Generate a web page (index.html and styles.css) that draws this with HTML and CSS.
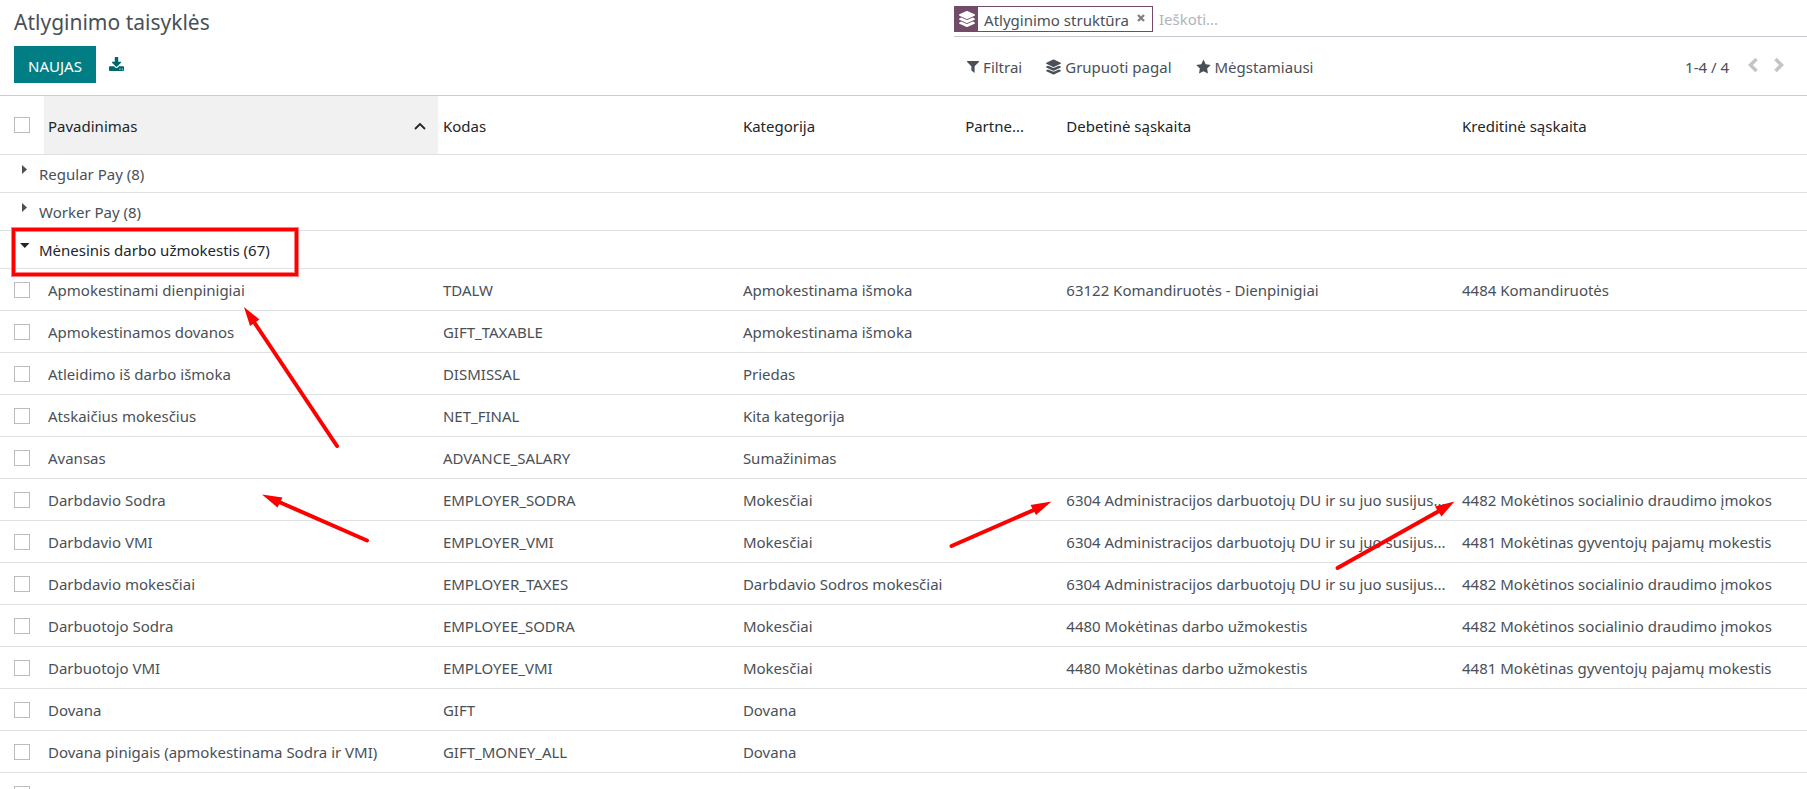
FILE: index.html
```html
<!DOCTYPE html>
<html lang="lt">
<head>
<meta charset="utf-8">
<title>Atlyginimo taisyklės</title>
<link rel="stylesheet" href="styles.css">
</head>
<body>
<svg class="defs" aria-hidden="true">
  <symbol id="layers" viewBox="0 0 512 512"><path d="M12.41 148.02l232.94 105.67c6.8 3.09 14.49 3.09 21.29 0l232.94-105.67c16.55-7.51 16.55-32.52 0-40.03L266.65 2.31a25.607 25.607 0 0 0-21.29 0L12.41 107.98c-16.55 7.51-16.55 32.53 0 40.04zm487.18 88.28l-58.09-26.33-161.64 73.27c-7.56 3.43-15.59 5.17-23.86 5.17s-16.29-1.74-23.86-5.17L70.51 209.97l-58.1 26.33c-16.55 7.5-16.55 32.5 0 40l232.94 105.59c6.8 3.08 14.49 3.08 21.29 0L499.59 276.3c16.55-7.5 16.55-32.5 0-40zm0 127.8l-57.87-26.23-161.86 73.37c-7.56 3.43-15.59 5.17-23.86 5.17s-16.29-1.74-23.86-5.17L70.29 337.87 12.41 364.1c-16.55 7.5-16.55 32.5 0 40l232.94 105.59c6.8 3.08 14.49 3.08 21.29 0L499.59 404.1c16.55-7.5 16.55-32.5 0-40z"/></symbol>
</svg>
<header class="panel">
  <div class="panel-left">
    <h1 class="title">Atlyginimo taisyklės</h1>
    <div class="actions">
      <button class="btn-new" type="button">NAUJAS</button>
      <button class="btn-icon" type="button" aria-label="Eksportuoti">
        <svg width="15" height="14" viewBox="0 0 1664 1536"><path d="M1280 1344q0-26-19-45t-45-19-45 19-19 45 19 45 45 19 45-19 19-45zm256 0q0-26-19-45t-45-19-45 19-19 45 19 45 45 19 45-19 19-45zm128-224v320q0 40-28 68t-68 28h-1472q-40 0-68-28t-28-68v-320q0-40 28-68t68-28h465l135 136q58 56 136 56t136-56l136-136h464q40 0 68 28t28 68zm-325-569q17 41-14 70l-448 448q-18 19-45 19t-45-19l-448-448q-31-29-14-70 17-39 59-39h256v-448q0-26 19-45t45-19h256q26 0 45 19t19 45v448h256q42 0 59 39z"/></svg>
      </button>
    </div>
  </div>
  <div class="panel-right">
    <div class="search">
      <div class="facet">
        <span class="facet-icon"><svg width="16" height="16"><use href="#layers"/></svg></span>
        <span class="facet-label">Atlyginimo struktūra</span>
        <button class="facet-remove" type="button" aria-label="Pašalinti"><svg width="8" height="8" viewBox="0 0 8 8"><path d="M1 1l6 6M7 1L1 7" stroke="currentColor" stroke-width="2.400"/></svg></button>
      </div>
      <input class="search-input" type="text" placeholder="Ieškoti..." aria-label="Ieškoti">
    </div>
    <div class="tools">
      <div class="menus">
        <button class="menu" type="button"><svg width="12" height="16" viewBox="0 0 12 16"><path d="M0.300 2h11.400q.5.600 0 1.200L7.600 7.300V14L4.400 11.500V7.300L.3 3.200q-.5-.6 0-1.200z"/></svg>Filtrai</button>
        <button class="menu" type="button"><svg width="15" height="16"><use href="#layers"/></svg>Grupuoti pagal</button>
        <button class="menu" type="button"><svg width="15" height="16" viewBox="0 0 15 16"><path d="M7.500 0.500l2.200 4.700 5.100.7-3.700 3.600.9 5.100-4.500-2.400L3 14.600l.9-5.100L.2 5.900l5.100-.7z"/></svg>Mėgstamiausi</button>
      </div>
      <div class="pager">
        <span>1-4 / 4</span>
        <div class="pager-nav">
          <button type="button" aria-label="Ankstesnis"><svg width="10" height="14" viewBox="0 0 10 14"><path d="M8.500 1L2.500 7l6 6" /></svg></button>
          <button type="button" aria-label="Kitas"><svg width="10" height="14" viewBox="0 0 10 14"><path d="M1.500 1l6 6-6 6" /></svg></button>
        </div>
      </div>
    </div>
  </div>
</header>
<main>
<table class="list">
  <colgroup><col class="c-check"><col class="c-name"><col class="c-code"><col class="c-cat"><col class="c-partner"><col class="c-debit"><col class="c-credit"></colgroup>
  <thead>
    <tr>
      <th class="check"><input type="checkbox" aria-label="Pažymėti viską"></th>
      <th class="sorted" scope="col"><div class="sort"><span>Pavadinimas</span><svg width="12" height="8" viewBox="0 0 12 8"><path d="M1 7l5-5 5 5" fill="none" stroke="currentColor" stroke-width="1.800"/></svg></div></th>
      <th scope="col">Kodas</th><th scope="col">Kategorija</th><th scope="col">Partne...</th><th scope="col">Debetinė sąskaita</th><th scope="col">Kreditinė sąskaita</th>
    </tr>
  </thead>
  <tbody>
    <tr class="group"><th colspan="7"><div class="group-name"><svg width="10" height="10" viewBox="0 0 10 10"><path d="M2 0l5 4.500L2 9z"/></svg>Regular Pay (8)</div></th></tr>
    <tr class="group"><th colspan="7"><div class="group-name"><svg width="10" height="10" viewBox="0 0 10 10"><path d="M2 0l5 4.500L2 9z"/></svg>Worker Pay (8)</div></th></tr>
    <tr class="group open"><th colspan="7"><div class="group-name"><svg width="10" height="10" viewBox="0 0 10 10"><path d="M0 2h9.500L4.800 7z"/></svg>Mėnesinis darbo užmokestis (67)</div></th></tr>
    <tr><td class="check"><input type="checkbox" aria-label="Apmokestinami dienpinigiai"></td><td class="name">Apmokestinami dienpinigiai</td><td>TDALW</td><td>Apmokestinama išmoka</td><td></td><td>63122 Komandiruotės - Dienpinigiai</td><td>4484 Komandiruotės</td></tr>
    <tr><td class="check"><input type="checkbox" aria-label="Apmokestinamos dovanos"></td><td class="name">Apmokestinamos dovanos</td><td>GIFT_TAXABLE</td><td>Apmokestinama išmoka</td><td></td><td></td><td></td></tr>
    <tr><td class="check"><input type="checkbox" aria-label="Atleidimo iš darbo išmoka"></td><td class="name">Atleidimo iš darbo išmoka</td><td>DISMISSAL</td><td>Priedas</td><td></td><td></td><td></td></tr>
    <tr><td class="check"><input type="checkbox" aria-label="Atskaičius mokesčius"></td><td class="name">Atskaičius mokesčius</td><td>NET_FINAL</td><td>Kita kategorija</td><td></td><td></td><td></td></tr>
    <tr><td class="check"><input type="checkbox" aria-label="Avansas"></td><td class="name">Avansas</td><td>ADVANCE_SALARY</td><td>Sumažinimas</td><td></td><td></td><td></td></tr>
    <tr><td class="check"><input type="checkbox" aria-label="Darbdavio Sodra"></td><td class="name">Darbdavio Sodra</td><td>EMPLOYER_SODRA</td><td>Mokesčiai</td><td></td><td>6304 Administracijos darbuotojų DU ir su juo susijus...</td><td>4482 Mokėtinos socialinio draudimo įmokos</td></tr>
    <tr><td class="check"><input type="checkbox" aria-label="Darbdavio VMI"></td><td class="name">Darbdavio VMI</td><td>EMPLOYER_VMI</td><td>Mokesčiai</td><td></td><td>6304 Administracijos darbuotojų DU ir su juo susijus...</td><td>4481 Mokėtinas gyventojų pajamų mokestis</td></tr>
    <tr><td class="check"><input type="checkbox" aria-label="Darbdavio mokesčiai"></td><td class="name">Darbdavio mokesčiai</td><td>EMPLOYER_TAXES</td><td>Darbdavio Sodros mokesčiai</td><td></td><td>6304 Administracijos darbuotojų DU ir su juo susijus...</td><td>4482 Mokėtinos socialinio draudimo įmokos</td></tr>
    <tr><td class="check"><input type="checkbox" aria-label="Darbuotojo Sodra"></td><td class="name">Darbuotojo Sodra</td><td>EMPLOYEE_SODRA</td><td>Mokesčiai</td><td></td><td>4480 Mokėtinas darbo užmokestis</td><td>4482 Mokėtinos socialinio draudimo įmokos</td></tr>
    <tr><td class="check"><input type="checkbox" aria-label="Darbuotojo VMI"></td><td class="name">Darbuotojo VMI</td><td>EMPLOYEE_VMI</td><td>Mokesčiai</td><td></td><td>4480 Mokėtinas darbo užmokestis</td><td>4481 Mokėtinas gyventojų pajamų mokestis</td></tr>
    <tr><td class="check"><input type="checkbox" aria-label="Dovana"></td><td class="name">Dovana</td><td>GIFT</td><td>Dovana</td><td></td><td></td><td></td></tr>
    <tr><td class="check"><input type="checkbox" aria-label="Dovana pinigais"></td><td class="name">Dovana pinigais (apmokestinama Sodra ir VMI)</td><td>GIFT_MONEY_ALL</td><td>Dovana</td><td></td><td></td><td></td></tr>
    <tr><td class="check"><input type="checkbox" aria-label="Kita taisyklė"></td><td></td><td></td><td></td><td></td><td></td><td></td></tr>
  </tbody>
</table>
</main>
<svg class="marks" width="1807" height="789" viewBox="0 0 1807 789" aria-hidden="true">
  <rect x="13.500" y="229.500" width="283" height="45" fill="none" stroke="#ff8080" stroke-width="5"/>
  <rect x="13.500" y="229.500" width="283" height="45" fill="none" stroke="#f00" stroke-width="3"/>
  <g stroke="#f00" stroke-width="4" stroke-linecap="round">
    <path d="M254 322L337 446"/><path d="M278 501.500L367 540.500"/><path d="M1035 509.500L951.500 546"/><path d="M1439 511L1337.500 568"/>
  </g>
  <g fill="#f00">
    <path d="M244 307L259.500 319.500L250 326z"/><path d="M262 494.500L282.500 497.500L277.500 507.500z"/><path d="M1051.500 501.500L1030.500 505L1036 515z"/><path d="M1454.500 501.500L1435 506.500L1441.500 516.500z"/>
  </g>
</svg>
</body>
</html>
```
FILE: styles.css
```css
* { box-sizing: border-box; }
body {
  margin: 0;
  height: 100vh;
  overflow: hidden;
  background: #fff;
  color: #495057;
  font: 15px/24px "Noto Sans", "Open Sans", sans-serif;
}
button {
  margin: 0;
  padding: 0;
  border: 0;
  background: none;
  color: inherit;
  font: inherit;
}
svg { display: block; fill: currentColor; }
.defs { position: absolute; width: 0; height: 0; }

.panel {
  display: grid;
  grid-template-columns: 52.8% 1fr;
  border-bottom: 1px solid #c9ccd2;
}
.panel-left { padding: 6px 14px 12px; }
.title {
  margin: 0;
  font-size: 21px;
  line-height: 32px;
  font-weight: 400;
}
.actions {
  display: flex;
  align-items: center;
  gap: 13px;
  margin-top: 8px;
}
.btn-new {
  height: 37px;
  padding: 2px 14px 0;
  background: #017e84;
  color: #fff;
}
.btn-icon { padding-bottom: 2px; color: #01666b; }

.search {
  display: flex;
  align-items: center;
  gap: 6px;
  height: 37px;
  padding-top: 1px;
  border-bottom: 1px solid #c5c8d0;
}
.facet {
  display: flex;
  align-items: stretch;
  height: 26px;
  border: 1px solid #714b67;
}
.facet-icon {
  display: flex;
  align-items: center;
  justify-content: center;
  width: 23px;
  background: #714b67;
  color: #fff;
}
.facet-label { padding: 1px 8px 0 6px; }
.facet-remove { padding: 0 7px 2px 0; color: #808488; }
.search-input {
  flex: 1;
  min-width: 0;
  padding: 0;
  border: 0;
  outline: 0;
  font: inherit;
  color: inherit;
}
.search-input::placeholder { color: #b0b4ba; opacity: 1; }
.tools {
  display: flex;
  justify-content: space-between;
  padding: 18px 23px 0 13px;
}
.menus { display: flex; gap: 24px; }
.menu { display: flex; align-items: center; gap: 4px; }
.pager { display: flex; gap: 19px; }
.pager-nav { display: flex; gap: 16px; padding-bottom: 4px; }
.pager-nav path { fill: none; stroke: #c2c4c9; stroke-width: 3.5; }

.list {
  width: 100%;
  table-layout: fixed;
  border-collapse: separate;
  border-spacing: 0;
}
.c-check { width: 44px; }
.c-name { width: 21.8%; }
.c-code { width: 16.6%; }
.c-cat { width: 12.3%; }
.c-partner { width: 5.6%; }
.c-debit { width: 21.9%; }
.list th,
.list td {
  height: 42px;
  padding: 0 0 0 5px;
  border-bottom: 1px solid #dee0e3;
  text-align: left;
  font-weight: 400;
  white-space: nowrap;
}
.list thead th { height: 59px; padding-top: 2px; color: #212529; }
.list thead .check { padding-top: 0; }
.list .check { padding: 0 0 0 14px; }
.list .name,
.list thead .sorted { padding-left: 4px; }
.list .sorted { background: #f1f1f1; }
.sort {
  display: flex;
  align-items: center;
  justify-content: space-between;
  padding-right: 12px;
}
.check input {
  appearance: none;
  display: block;
  width: 16px;
  height: 16px;
  margin: 0;
  border: 1px solid #babcbf;
  background: #fff;
}
.list .group th { height: 38px; padding: 0 20px; }
.list .open th { color: #212529; }
.group-name { display: flex; gap: 9px; }
.group-name svg { margin-top: 3px; }
.marks { position: absolute; top: 0; left: 0; pointer-events: none; }
```
